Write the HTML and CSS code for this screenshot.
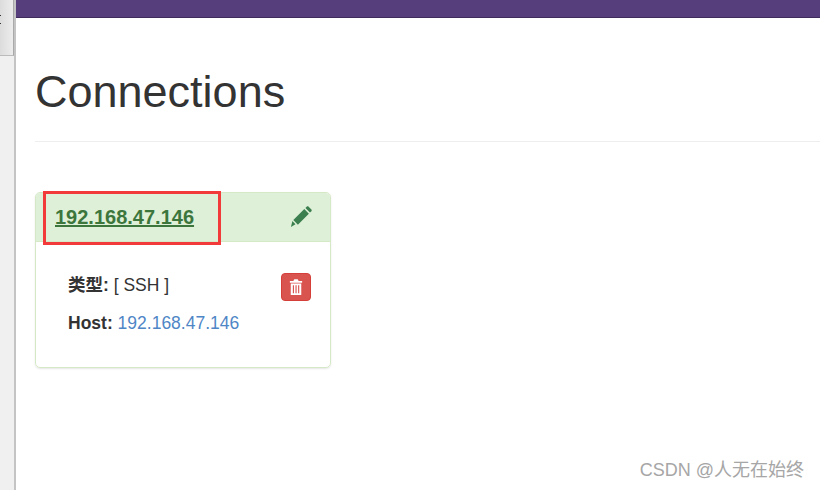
FILE: index.html
```html
<!DOCTYPE html>
<html lang="en">
<head>
    <meta charset="UTF-8">
    <meta name="viewport" content="width=device-width, initial-scale=1.0">
    <title>Connections</title>
    <link rel="stylesheet" href="styles.css">
</head>
<body>

<div class="window-edge">
    <div class="edge-top">
        <span class="edge-mark"></span>
        <span class="edge-mark"></span>
    </div>
    <div class="edge-bottom"></div>
</div>

<div class="page">
    <div class="navbar"></div>

    <div class="container">
        <h1 class="page-title">Connections</h1>

        <div class="panel">
            <div class="panel-heading">
                <a class="panel-title" href="#">192.168.47.146</a>
                <svg class="icon-pencil" viewBox="0 0 24 24">
                    <path d="M1 23l1.6-6.6L6 19.8 1 23zM3.6 15.4L15.6 3.4l5 5-12 12-5-5zM16.8 2.2l1.6-1.6c.5-.5 1.2-.5 1.7 0l3.3 3.3c.5.5.5 1.2 0 1.7l-1.6 1.6-5-5z"/>
                </svg>
                <span class="highlight-box"></span>
            </div>
            <div class="panel-body">
                <div class="details">
                    <p class="detail-row"><strong>类型:</strong> [ SSH ]</p>
                    <p class="detail-row"><strong>Host:</strong> <a class="host-link" href="#">192.168.47.146</a></p>
                </div>
                <button class="btn-delete">
                    <svg class="icon-trash" viewBox="0 0 16 18">
                        <path d="M6 0h4l1 2h4v2H1V2h4l1-2zM2 5h12v13H2V5zm2.4 2v9h1.3V7H4.4zm3 0v9h1.3V7H7.4zm3 0v9h1.3V7h-1.3z"/>
                    </svg>
                </button>
            </div>
        </div>
    </div>
</div>

<div class="watermark">CSDN @人无在始终</div>

</body>
</html>
```

FILE: styles.css
```css
* {
    box-sizing: border-box;
}
html, body {
    height: 100%;
}
body {
    font-family: "Liberation Sans", Arial, "Noto Sans CJK SC", sans-serif;
    font-size: 17.5px;
    color: #333;
    background-color: #fff;
    margin: 0;
    display: flex;
    overflow: hidden;
}
.window-edge {
    width: 16px;
    flex-shrink: 0;
    display: flex;
    flex-direction: column;
    border-right: 2px solid #c4c4c4;
}
.edge-top {
    height: 56px;
    background: linear-gradient(to right, #dcdcdc, #ececec);
    border-right: 1px solid #a9a9a9;
    border-bottom: 1px solid #bbb;
    display: flex;
    flex-direction: column;
    gap: 7px;
    padding-top: 15px;
}
.edge-mark {
    width: 1px;
    height: 1px;
    background: #333;
}
.edge-bottom {
    flex: 1;
    background: #f0f0f0;
}
.page {
    flex: 1;
    min-width: 0;
}
.navbar {
    height: 18px;
    background-color: #563d7c;
    border-bottom: 1px solid #3f2c5c;
}
.container {
    padding: 0 0 0 19px;
}
.page-title {
    font-size: 45px;
    font-weight: 500;
    line-height: 50px;
    color: #333;
    margin: 0 0 50px;
    padding: 49px 0 24px;
    border-bottom: 1px solid #eee;
}
.panel {
    width: 296px;
    height: 176px;
    border: 1px solid #d6e9c6;
    border-radius: 5px;
    box-shadow: 0 1px 2px rgba(0, 0, 0, 0.1);
}
.panel-heading {
    height: 49px;
    background-color: #dff0d8;
    border-bottom: 1px solid #d6e9c6;
    border-radius: 4px 4px 0 0;
    display: flex;
    justify-content: space-between;
    align-items: center;
    padding: 0 18px 0 19px;
    position: relative;
}
.panel-title {
    font-size: 20px;
    font-weight: bold;
    color: #3c763d;
    text-decoration: underline;
}
.icon-pencil {
    width: 22px;
    height: 22px;
    fill: #3c8050;
}
/* red annotation drawn on the screenshot */
.highlight-box {
    position: absolute;
    left: 7px;
    top: -2px;
    width: 178px;
    height: 54px;
    border: 3px solid #f33a3a;
}
.panel-body {
    display: flex;
    justify-content: space-between;
    align-items: flex-start;
    padding: 31px 19px 0 32px;
}
.detail-row {
    margin: 0 0 14px;
    line-height: 24px;
}
.details {
    padding-top: 0;
}
.host-link {
    color: #4f86c6;
    text-decoration: none;
}
.btn-delete {
    width: 30px;
    height: 28px;
    padding: 0;
    border: 1px solid #d43f3a;
    border-radius: 4px;
    background-color: #d9534f;
    display: flex;
    justify-content: center;
    align-items: center;
}
.icon-trash {
    width: 14px;
    height: 16px;
    fill: #fff;
}
.watermark {
    position: absolute;
    right: 16px;
    bottom: 9px;
    font-size: 18px;
    color: #a6a6a6;
}
```
